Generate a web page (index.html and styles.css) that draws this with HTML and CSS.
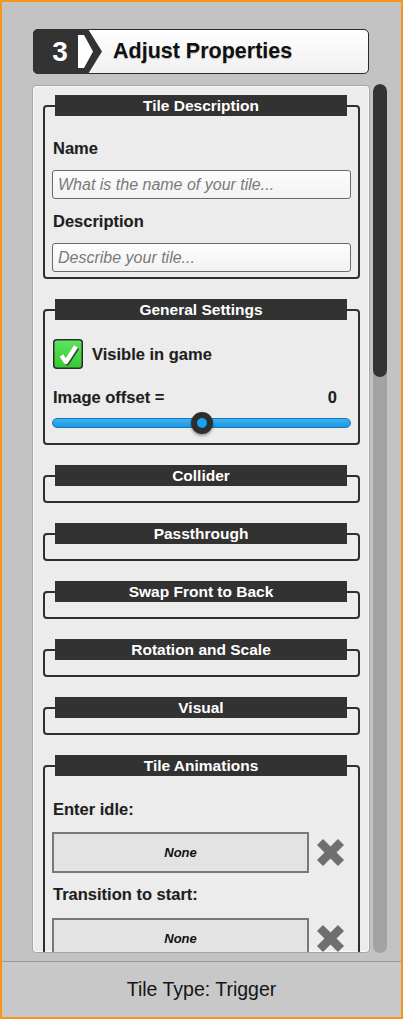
FILE: index.html
```html
<!DOCTYPE html>
<html>
<head>
<meta charset="utf-8">
<link rel="stylesheet" href="styles.css">
</head>
<body>
<div class="window">
  <div class="main">
    <div class="header">
      <div class="badge">
        <span class="step">3</span>
        <svg class="chev" width="16" height="33" viewBox="0 0 16 33"><polygon points="0,0 6,0 15,16.5 6,33 0,33" fill="#ffffff"/></svg>
      </div>
      <div class="header-title">Adjust Properties</div>
    </div>
    <div class="body-row">
      <div class="panel">
        <section class="group">
          <div class="group-title">Tile Description</div>
          <div class="group-body desc-body">
            <div class="label">Name</div>
            <input class="text-input" type="text" placeholder="What is the name of your tile...">
            <div class="label">Description</div>
            <input class="text-input" type="text" placeholder="Describe your tile...">
          </div>
        </section>
        <section class="group">
          <div class="group-title">General Settings</div>
          <div class="group-body general-body">
            <div class="check-row">
              <svg class="checkbox" width="30" height="30" viewBox="0 0 30 30">
                <defs>
                  <linearGradient id="cg" x1="0" y1="0" x2="0" y2="1">
                    <stop offset="0" stop-color="#5fe55f"/>
                    <stop offset="1" stop-color="#34c934"/>
                  </linearGradient>
                </defs>
                <rect x="0.75" y="0.75" width="28.5" height="28.5" rx="3" fill="url(#cg)" stroke="#2d2d2d" stroke-width="1.5"/>
                <polyline points="8.5,16.5 13,23 23,7.5" fill="none" stroke="#2f4a2f" stroke-width="4.5" stroke-linejoin="round" transform="translate(1.2,1.2)"/>
                <polyline points="8.5,16.5 13,23 23,7.5" fill="none" stroke="#ffffff" stroke-width="4.5" stroke-linejoin="round"/>
              </svg>
              <span class="check-label">Visible in game</span>
            </div>
            <div class="offset-row">
              <span>Image offset =</span>
              <span>0</span>
            </div>
            <div class="slider">
              <div class="track"></div>
              <div class="knob"></div>
            </div>
          </div>
        </section>
        <section class="group">
          <div class="group-title">Collider</div>
          <div class="group-body collapsed-body"></div>
        </section>
        <section class="group">
          <div class="group-title">Passthrough</div>
          <div class="group-body collapsed-body"></div>
        </section>
        <section class="group">
          <div class="group-title">Swap Front to Back</div>
          <div class="group-body collapsed-body"></div>
        </section>
        <section class="group">
          <div class="group-title">Rotation and Scale</div>
          <div class="group-body collapsed-body"></div>
        </section>
        <section class="group">
          <div class="group-title">Visual</div>
          <div class="group-body collapsed-body"></div>
        </section>
        <section class="group">
          <div class="group-title">Tile Animations</div>
          <div class="group-body anim-body">
            <div class="label anim-label">Enter idle:</div>
            <div class="slot-row">
              <div class="slot">None</div>
              <svg class="clear" width="31" height="31" viewBox="0 0 31 31"><path d="M5 5 L26 26 M26 5 L5 26" stroke="#6f6f6f" stroke-width="8.5"/></svg>
            </div>
            <div class="label anim-label next">Transition to start:</div>
            <div class="slot-row">
              <div class="slot">None</div>
              <svg class="clear" width="31" height="31" viewBox="0 0 31 31"><path d="M5 5 L26 26 M26 5 L5 26" stroke="#6f6f6f" stroke-width="8.5"/></svg>
            </div>
          </div>
        </section>
      </div>
      <div class="scrollbar"><div class="thumb"></div></div>
    </div>
  </div>
  <div class="footer">Tile Type: Trigger</div>
</div>
</body>
</html>
```
FILE: styles.css
```css
html, body {
  margin: 0;
  padding: 0;
}
body {
  font-family: "Liberation Sans", Arial, sans-serif;
  background: #c3c3c3;
}
.window {
  width: 403px;
  height: 1019px;
  box-sizing: border-box;
  border: 2px solid #f5961c;
  background: #c3c3c3;
  display: flex;
  flex-direction: column;
  overflow: hidden;
}
.main {
  flex: 1;
  min-height: 0;
  padding: 27px 0 0 30px;
  display: flex;
  flex-direction: column;
}
.header {
  display: flex;
  align-items: center;
  margin-left: 1px;
  width: 336px;
  height: 45px;
  box-sizing: border-box;
  border: 1px solid #2b2b2b;
  border-radius: 5px;
  background: linear-gradient(#ffffff, #f0f0f0);
}
.badge {
  display: flex;
  align-items: center;
  width: 69px;
  height: 45px;
  margin: -1px 0 -1px -1px;
  background: #333333;
  border-radius: 5px 0 0 5px;
  clip-path: polygon(0 0, 55px 0, 69px 50%, 55px 100%, 0 100%);
  flex-shrink: 0;
}
.step {
  margin-left: 17px;
  width: 20px;
  color: #ffffff;
  font-weight: bold;
  font-size: 28px;
  line-height: 45px;
  text-align: center;
}
.chev {
  margin-left: 8px;
  display: block;
}
.header-title {
  margin-left: 11px;
  font-weight: bold;
  font-size: 21.5px;
  color: #111111;
  text-shadow: 0 1px 1px rgba(0, 0, 0, 0.25);
}
.body-row {
  display: flex;
  margin-top: 11px;
  height: 868px;
}
.panel {
  width: 338px;
  flex-shrink: 0;
  box-sizing: border-box;
  border: 1px solid #a6a6a6;
  border-radius: 4px;
  background: #ececec;
  box-shadow: inset 0 0 0 1px #f8f8f8;
  overflow: hidden;
  padding: 19px 9px 0 10px;
}
.scrollbar {
  width: 14px;
  margin-left: 3px;
  margin-top: -1px;
  border-radius: 7px;
  background: #a3a3a3;
  overflow: hidden;
}
.thumb {
  height: 293px;
  border-radius: 7px;
  background: #333333;
}
.group {
  border: 2px solid #2f2f2f;
  border-radius: 4px;
  margin-bottom: 30px;
}
.group-title {
  height: 21px;
  margin: -12px 11px 0 10px;
  background: #323232;
  color: #ffffff;
  font-weight: bold;
  font-size: 15.5px;
  line-height: 21px;
  text-align: center;
}
.group-body {
  padding: 10px 7px 5px 7px;
}
.collapsed-body {
  padding: 0 0 15px 0;
}
.label {
  font-weight: bold;
  font-size: 16.5px;
  line-height: 20px;
  color: #1e1e1e;
  margin: 12px 0;
  padding-left: 1px;
  text-shadow: 0 0 1px rgba(0, 0, 0, 0.15);
}
.text-input {
  display: block;
  width: 100%;
  height: 29px;
  margin: 0;
  box-sizing: border-box;
  border: 1px solid #6a6a6a;
  border-radius: 3px;
  background: linear-gradient(#fdfdfd, #f2f2f2);
  padding: 0 5px;
  font-family: "Liberation Sans", Arial, sans-serif;
  font-style: italic;
  font-size: 16px;
  color: #333333;
  outline: none;
}
.text-input::placeholder {
  color: #7a7a7a;
  font-style: italic;
}
.general-body {
  padding-bottom: 9px;
}
.check-row {
  display: flex;
  align-items: center;
  gap: 9px;
  height: 30px;
  margin-top: 9px;
  padding-left: 1px;
}
.checkbox {
  display: block;
}
.check-label {
  font-weight: bold;
  font-size: 16.5px;
  color: #1e1e1e;
  text-shadow: 0 0 1px rgba(0, 0, 0, 0.15);
}
.offset-row {
  display: flex;
  justify-content: space-between;
  margin-top: 18px;
  padding: 0 14px 0 1px;
  font-weight: bold;
  font-size: 16.5px;
  line-height: 20px;
  color: #1e1e1e;
  text-shadow: 0 0 1px rgba(0, 0, 0, 0.15);
}
.slider {
  position: relative;
  display: flex;
  align-items: center;
  height: 22px;
  margin-top: 5px;
}
.track {
  flex: 1;
  height: 10px;
  box-sizing: border-box;
  border: 1px solid #1578b3;
  border-radius: 5px;
  background: linear-gradient(#3db3f5, #1a98e0);
}
.knob {
  position: absolute;
  left: 50%;
  top: 0;
  width: 22px;
  height: 22px;
  margin-left: -11px;
  box-sizing: border-box;
  border: 6px solid #2e2e2e;
  border-radius: 50%;
  background: #14a2f5;
  box-shadow: 0 2px 3px rgba(0, 0, 0, 0.35);
}
.anim-body {
  padding-bottom: 0;
}
.anim-label {
  margin: 13px 0 13px 0;
}
.anim-label.next {
  margin: 11px 0 14px 0;
}
.slot-row {
  display: flex;
  align-items: center;
  gap: 6px;
}
.slot {
  width: 257px;
  height: 41px;
  box-sizing: border-box;
  border: 2px solid #787878;
  background: #e3e3e3;
  display: flex;
  align-items: center;
  justify-content: center;
  font-weight: bold;
  font-style: italic;
  font-size: 13px;
  color: #111111;
}
.clear {
  display: block;
}
.footer {
  height: 55px;
  border-top: 1px solid #9a9a9a;
  background: #c8c8c8;
  display: flex;
  align-items: center;
  justify-content: center;
  font-size: 19.5px;
  color: #151515;
}
```
